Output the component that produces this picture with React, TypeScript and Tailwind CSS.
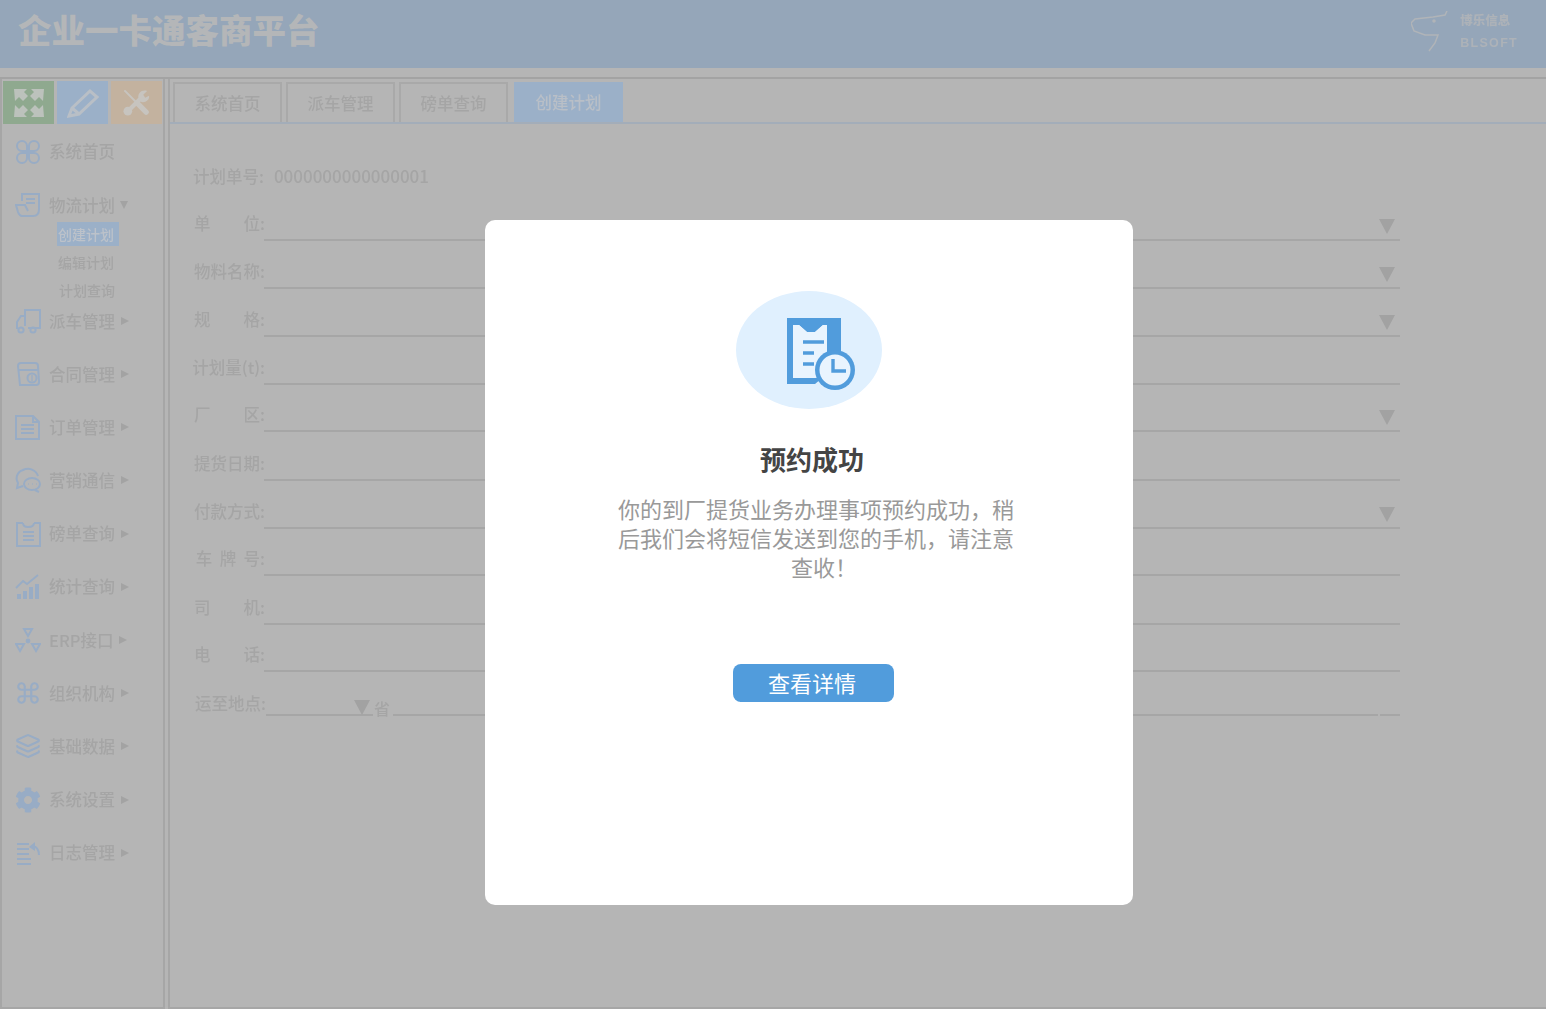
import React from "react";
import { Command, Layers } from "lucide-react";
import { FaCog } from "react-icons/fa";

const font = { fontFamily: '"Noto Sans CJK SC","Noto Sans",sans-serif' };
const blue = "#98acc5";

function S({ children, className = "" }: { children: React.ReactNode; className?: string }) {
  return (
    <svg viewBox="0 0 26 26" fill="none" stroke={blue} strokeWidth="2" className={`w-[26px] h-[26px] shrink-0 ${className}`}>
      {children}
    </svg>
  );
}

const Dots = () => (
  <S>
    <path d="M12 12H7a5 5 0 1 1 5-5zM14 12V7a5 5 0 1 1 5 5zM12 14v5a5 5 0 1 1-5-5zM14 14h5a5 5 0 1 1-5 5z" />
  </S>
);
const Plan = () => (
  <S>
    <path d="M7 9V2h17v15c0 5-2 7-6 7H7c-2 0-3-1-4-4l-2-7h9l3 6" /><path d="M11 7h9M11 11h9" />
  </S>
);
const Truck = () => (
  <S>
    <path d="M10 18V2h15v18H13M10 8H6l-4 6v6h1" /><circle cx="6" cy="22" r="2.6" /><circle cx="18" cy="22" r="2.6" />
  </S>
);
const Contract = () => (
  <S>
    <path d="M5 24L3 5c0-2 1-3 3-3h14c2 0 3 1 3 3l1 16c0 2-1 3-3 3zM3 9h20" /><circle cx="17" cy="17" r="4.5" /><path d="M17 14v6" strokeWidth="1.2" />
  </S>
);
const Order = () => (
  <S>
    <path d="M1 2h17l6 6v17H1zM18 2v6h6" /><path d="M6 11h13M6 15h13M6 19h13" />
  </S>
);
const Chat = () => (
  <S>
    <path d="M23 9C21 3 14 0 8 3 2 5 0 11 3 16l-1 5 6-2" /><ellipse cx="17" cy="17" rx="8" ry="6" /><path d="M13 17h.5M17 17h.5M21 17h.5M20 23l4 2" />
  </S>
);
const Sheet = () => (
  <S>
    <path d="M8 2H2v23h23V2h-6M8 2c0 3 2 4 5 4s6-1 6-4M8 11h11M8 15h11M8 19h11" />
  </S>
);
const Stats = () => (
  <svg viewBox="0 0 26 26" className="w-[26px] h-[26px] shrink-0" fill={blue}>
    <rect x="2" y="20" width="4" height="5" /><rect x="8" y="17" width="4" height="8" /><rect x="14" y="13" width="4" height="12" /><rect x="20" y="10" width="4" height="15" />
    <path d="M1 14L8 7l4 3 11-9" fill="none" stroke={blue} strokeWidth="1.8" />
  </svg>
);
const Erp = () => (
  <S>
    <path d="M9 2h8l-4 7zM1 17h8l-4 7zM17 17h8l-4 7z" /><circle cx="13" cy="14" r="1.4" fill={blue} />
  </S>
);
const Log = () => (
  <S>
    <path d="M2 4h12M2 9h12M2 14h12M2 19h14M2 24h14" strokeWidth="2.2" /><path d="M24 15c0-5-2-8-6-9" /><path d="M14 7l6-5v9z" fill={blue} stroke="none" />
  </S>
);

const items: { name: string; icon: React.ReactNode }[] = [
  { name: "合同管理", icon: <Contract /> },
  { name: "订单管理", icon: <Order /> },
  { name: "营销通信", icon: <Chat /> },
  { name: "磅单查询", icon: <Sheet /> },
  { name: "统计查询", icon: <Stats /> },
  { name: "ERP接口", icon: <Erp /> },
  { name: "组织机构", icon: <Command size={26} color={blue} strokeWidth={2} /> },
  { name: "基础数据", icon: <Layers size={26} color={blue} strokeWidth={2} /> },
  { name: "系统设置", icon: <FaCog size={26} color={blue} /> },
  { name: "日志管理", icon: <Log /> },
];

const Right = () => (
  <span className="-ml-[2px] w-0 h-0 border-y-[4px] border-y-transparent border-l-[8px] border-l-[#a3a3a3]" />
);
const Down = ({ className = "" }: { className?: string }) => (
  <span className={`w-0 h-0 border-x-[8px] border-x-transparent border-t-[15px] border-t-[#a2a2a2] ${className}`} />
);

const rows: { h: string; a: string; b?: string; tri?: boolean; right?: boolean }[] = [
  { h: "h-[48px]", a: "单", b: "位:", tri: true },
  { h: "h-[48px]", a: "物料名称:", tri: true },
  { h: "h-[48px]", a: "规", b: "格:", tri: true },
  { h: "h-[48px]", a: "计划量(t):" },
  { h: "h-[47px]", a: "厂", b: "区:", tri: true },
  { h: "h-[49px]", a: "提货日期:" },
  { h: "h-[48px]", a: "付款方式:", tri: true },
  { h: "h-[47px]", a: "车  牌  号:", right: true },
  { h: "h-[49px]", a: "司", b: "机:" },
  { h: "h-[47px]", a: "电", b: "话:" },
];

const tabs = ["系统首页", "派车管理", "磅单查询"];

function Background() {
  return (
    <div className="flex flex-col h-[1009px] blur-[0.5px] text-[#a5a5a5] font-medium">
      <header className="h-[68px] shrink-0 bg-[#95a6b9] flex items-center justify-between">
        <h1 className="ml-[18px] text-[33.5px] font-black text-[#b4b6b8] leading-none -mt-[10px]">企业一卡通客商平台</h1>
        <div className="flex items-center mr-[28px] gap-[12px] text-[#adb2b8] -mt-[6px]">
          <svg viewBox="0 0 37 41" className="w-[37px] h-[41px]" fill="none" stroke="#b0b4b8" strokeWidth="1.5">
            <path d="M36 0L34 4 22 6 4 8 0 12 3 20 14 24 27 24 24 32 18 40" />
            <circle cx="23" cy="10" r="1" fill="#b0b4b8" />
          </svg>
          <div className="flex flex-col gap-[5px] font-black items-start">
            <span className="text-[12.5px] leading-[18px]">博乐信息</span>
            <span className="font-['Liberation_Sans'] font-bold text-[12.5px] leading-[18px] tracking-[1.3px]">BLSOFT</span>
          </div>
        </div>
      </header>
      <div className="h-[9px] shrink-0" />
      <div className="flex-1 flex border-t-2 border-[#a3a3a3] min-h-0">
        <aside className="w-[165px] shrink-0 border-x-2 border-b-2 border-[#a6a6a6] flex flex-col">
          <div className="flex gap-[3px] pl-[1px] mt-[2px] h-[43px] shrink-0">
            <div className="w-[51px] bg-[#8fa98f] flex items-center justify-center">
              <svg viewBox="0 0 32 28" className="w-[32px] h-[28px]" fill="#bcc2bc">
                <path d="M1 0h13l-3 3 4 4-5 5-4-4-4 4zM31 0H18l3 3-4 4 5 5 4-4 4 4zM1 28h13l-3-3 4-4-5-5-4 4-4-4zM31 28H18l3-3-4-4 5-5 4 4 4-4z" />
              </svg>
            </div>
            <div className="w-[51px] bg-[#9bb0c8] flex items-center justify-center">
              <svg viewBox="0 0 32 30" className="w-[32px] h-[30px]" fill="none" stroke="#b9bfc6" strokeWidth="3">
                <path d="M2 28l3-8L23 3l7 6-18 17zM5 20l7 6" />
              </svg>
            </div>
            <div className="w-[51px] bg-[#c3b29f] flex items-center justify-center">
              <svg viewBox="0 0 28 28" className="w-[27px] h-[27px]" fill="none" stroke="#c7c4bf">
                <path d="M2 2l12 12" strokeWidth="2" strokeLinecap="round" />
                <path d="M15 15l9 9" strokeWidth="5.5" strokeLinecap="round" />
                <path d="M6 22L20 8" strokeWidth="4.4" />
                <circle cx="5" cy="23" r="4.5" fill="#c7c4bf" stroke="none" />
                <path d="M16 9c-1-5 4-9 9-7l-4 4 2 3 4-2c1 5-5 8-9 6z" fill="#c7c4bf" stroke="none" />
              </svg>
            </div>
          </div>
          <div className="flex items-center h-[53px] pl-[13px] mt-[1px] gap-[8px] text-[16.5px] shrink-0">
            <Dots />
            <span>系统首页</span>
          </div>
          <div className="flex items-center h-[30px] pl-[13px] mt-[12px] gap-[8px] text-[16.5px] shrink-0">
            <Plan />
            <span>物流计划</span>
            <span className="-ml-[3px] w-0 h-0 border-x-[4px] border-x-transparent border-t-[8px] border-t-[#a3a3a3]" />
          </div>
          <div className="flex flex-col pl-[55px] text-[14px] shrink-0">
            <div className="h-[28px] flex items-center">
              <span className="w-[62px] h-[24px] bg-[#9bb0c8] text-[#bcc2ca] flex items-center pl-[1px]">创建计划</span>
            </div>
            <div className="h-[28px] flex items-center pl-[1px]">编辑计划</div>
            <div className="h-[28px] flex items-center pl-[2px]">计划查询</div>
          </div>
          <div className="flex items-center h-[34px] mb-[9.5px] pl-[13px] gap-[8px] text-[16.5px] shrink-0">
            <Truck />
            <span>派车管理</span>
            <Right />
          </div>
          {items.map((it) => (
            <div key={it.name} className="flex items-center h-[53.2px] pl-[13px] gap-[8px] text-[16.5px] shrink-0">
              {it.icon}
              <span>{it.name}</span>
              <Right />
            </div>
          ))}
        </aside>
        <main className="ml-[3px] flex-1 border-l-2 border-b-2 border-[#a6a6a6] flex flex-col min-w-0">
          <nav className="flex h-[45px] shrink-0 pt-[3px] pl-[3px] gap-[4px] border-b-2 border-[#a3adb9]">
            {tabs.map((t) => (
              <div key={t} className="w-[109px] border-2 border-b-0 border-[#a9a9a9] flex items-center justify-center text-[16.5px]">
                {t}
              </div>
            ))}
            <div className="ml-[2px] w-[109px] bg-[#9bb0c8] text-[#b9bfc7] flex items-center justify-center text-[16.5px]">创建计划</div>
          </nav>
          <div className="pl-[21px] w-[1230px]">
            <div className="h-[69px] flex items-end text-[16.5px] pl-[2px]">
              <span className="leading-6 mb-[5px]">计划单号:</span>
              <span className="leading-6 mb-[5px] ml-[10px] text-[17px]">0000000000000001</span>
            </div>
            {rows.map((r) => (
              <div key={r.a} className={`flex items-end ${r.h}`}>
                <div className={`w-[74px] shrink-0 flex leading-6 mb-[6px] -mr-[3px] text-[16.5px] ${r.b ? "justify-between pl-[3px]" : "justify-end"}`}>
                  <span className="whitespace-pre">{r.a}</span>
                  {r.b && <span>{r.b}</span>}
                </div>
                <div className="ml-[2px] flex-1 h-[30px] border-b-2 border-[#a6a6a6] flex justify-end items-center pr-[5px]">
                  {r.tri && <Down className="mt-[2px]" />}
                </div>
              </div>
            ))}
            <div className="flex items-end h-[44px]">
              <div className="w-[75px] shrink-0 leading-6 mb-[1px] text-[16.5px] text-right">运至地点:</div>
              <div className="w-[107px] h-[30px] border-b-2 border-[#a6a6a6] flex justify-end items-center pr-[3px]"><Down className="mt-[15px]" /></div>
              <div className="w-[20px] text-[16px] leading-none pl-[1px]">省</div>
              <div className="flex-1 h-[30px] border-b-2 border-[#a6a6a6]" />
              <div className="ml-[2px] w-[20px] h-[30px] border-b-2 border-[#a6a6a6]" />
            </div>
          </div>
        </main>
      </div>
    </div>
  );
}

export default function App() {
  return (
    <div className="relative w-[1546px] h-[1009px] overflow-hidden bg-[#b5b5b5]" style={font}>
      <Background />
      <div className="absolute left-[485px] top-[220px] w-[648px] h-[685px] bg-white rounded-[10px] flex flex-col items-center pt-[71px]">
        <div className="w-[146px] h-[118px] rounded-[50%] bg-[#e0f0fe] flex items-center justify-center">
          <svg viewBox="0 0 68 72" className="w-[68px] h-[72px] ml-[24px] mt-[8px]">
            <path fillRule="evenodd" fill="#519cdc" d="M0 0h54v44L28 66H0zM6 7v53h34V7h-4l-8 7h-8L12 7z" />
            <path d="M6 7l6 0 8 7h8l8-7h4v44l-12 9H6z" fill="#e9f4fe" />
            <path d="M16 24h21M16 35h11M16 46h11" stroke="#519cdc" strokeWidth="3.5" />
            <circle cx="48" cy="52" r="20" fill="#519cdc" />
            <circle cx="48" cy="52" r="15.5" fill="#e9f4fe" />
            <path d="M46 41v12h13" fill="none" stroke="#519cdc" strokeWidth="3.4" />
          </svg>
        </div>
        <h2 className="mt-[31px] ml-[6px] text-[26px] leading-[38px] font-bold text-[#444444]">预约成功</h2>
        <p className="mt-[16px] ml-[14px] w-[400px] text-center text-[22px] leading-[29px] text-[#999999]">
          <span className="block">你的到厂提货业务办理事项预约成功，稍</span>
          <span className="block">后我们会将短信发送到您的手机，请注意</span>
          <span className="block pl-[16px]">查收！</span>
        </p>
        <button className="mt-[83px] ml-[9px] w-[161px] h-[38px] rounded-[8px] bg-[#519cdc] text-white text-[22px] leading-none flex items-center justify-center pr-[3px] pb-[2px]">
          查看详情
        </button>
      </div>
    </div>
  );
}
